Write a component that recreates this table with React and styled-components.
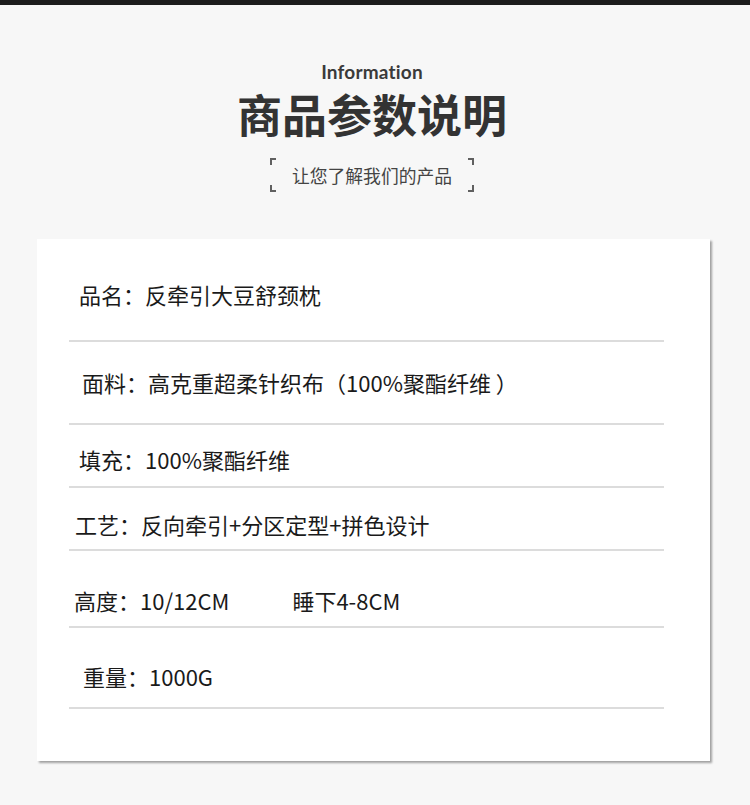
import React from "react";
import styled, { createGlobalStyle } from "styled-components";

const Global = createGlobalStyle`
  html, body { margin: 0; padding: 0; background: #f7f7f7; }
  body { font-family: "Noto Sans CJK SC", "Noto Sans", sans-serif; }
`;

const Page = styled.div`
  width: 750px;
  height: 805px;
  background: #f7f7f7;
  overflow: hidden;
`;

const TopBar = styled.div`
  height: 5px;
  background: #1c1c1c;
`;

const Header = styled.header`
  display: flex;
  flex-direction: column;
  align-items: center;
  padding: 56px 6px 0 0;
`;

const Eyebrow = styled.div`
  font-family: "Lato", "Inter", sans-serif;
  font-weight: 700;
  font-size: 19px;
  line-height: 22px;
  color: #3a3a3a;
  letter-spacing: 0.2px;
`;

const Title = styled.h1`
  margin: 5px 0 0;
  font-family: "Noto Sans CJK SC", sans-serif;
  font-weight: 700;
  font-size: 45px;
  line-height: 52px;
  color: #333;
`;

const Frame = styled.div`
  margin-top: 18px;
  width: 204px;
  height: 34px;
  display: flex;
  align-items: center;
  justify-content: center;
  background:
    linear-gradient(#606060, #606060) left top / 2px 7px no-repeat,
    linear-gradient(#606060, #606060) left top / 6px 2px no-repeat,
    linear-gradient(#606060, #606060) left bottom / 2px 7px no-repeat,
    linear-gradient(#606060, #606060) left bottom / 6px 2px no-repeat,
    linear-gradient(#606060, #606060) right top / 2px 7px no-repeat,
    linear-gradient(#606060, #606060) right top / 6px 2px no-repeat,
    linear-gradient(#606060, #606060) right bottom / 2px 7px no-repeat,
    linear-gradient(#606060, #606060) right bottom / 6px 2px no-repeat;
`;

const Subtitle = styled.span`
  font-family: "Noto Sans CJK SC", sans-serif;
  font-size: 17.8px;
  line-height: 22px;
  color: #444;
`;

const Card = styled.section`
  margin: 47px 0 0 37px;
  width: 673px;
  height: 522px;
  background: #fff;
  box-shadow: 2px 2px 2px rgba(0, 0, 0, 0.35);
  padding: 0 46px 0 32px;
  box-sizing: border-box;
`;

const Row = styled.div`
  box-sizing: border-box;
  height: ${(p) => p.$h}px;
  padding-top: ${(p) => p.$pt}px;
  padding-left: ${(p) => p.$indent}px;
  border-bottom: 2px solid #dcdcdc;
  display: flex;
  align-items: flex-start;
  gap: 63px;
`;

const Text = styled.span`
  font-family: "Noto Sans CJK SC", sans-serif;
  font-size: 22px;
  line-height: 24px;
  color: #1a1a1a;
  white-space: pre;
`;

const rows = [
  { h: 103, pt: 43, indent: 10, parts: ["品名：反牵引大豆舒颈枕"] },
  { h: 83, pt: 28, indent: 13, parts: ["面料：高克重超柔针织布（100%聚酯纤维 ）"] },
  { h: 63, pt: 22, indent: 10, parts: ["填充：100%聚酯纤维"] },
  { h: 63, pt: 24, indent: 6, parts: ["工艺：反向牵引+分区定型+拼色设计"] },
  { h: 77, pt: 37, indent: 5, parts: ["高度：10/12CM", "睡下4-8CM"] },
  { h: 81, pt: 36, indent: 14, parts: ["重量：1000G"] },
];

export default function App() {
  return (
    <Page>
      <Global />
      <TopBar />
      <Header>
        <Eyebrow>Information</Eyebrow>
        <Title>商品参数说明</Title>
        <Frame>
          <Subtitle>让您了解我们的产品</Subtitle>
        </Frame>
      </Header>
      <Card>
        {rows.map((r, i) => (
          <Row key={i} $h={r.h} $pt={r.pt} $indent={r.indent}>
            {r.parts.map((t, j) => (
              <Text key={j}>{t}</Text>
            ))}
          </Row>
        ))}
      </Card>
    </Page>
  );
}
